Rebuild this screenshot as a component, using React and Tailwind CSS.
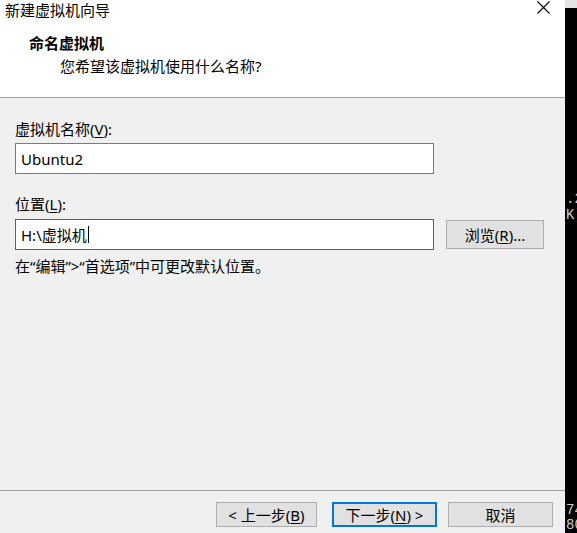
import React from 'react';

const font = { fontFamily: '"Noto Sans", "Noto Sans CJK SC", sans-serif' };
const mono = { fontFamily: '"Liberation Mono", monospace' };

const U = ({ children }) => <span className="underline underline-offset-2">{children}</span>;

const App = () => {
    return (
        <div className="flex h-[533px] w-[577px] overflow-hidden text-[15px] text-black" style={font}>
            <div className="flex w-[565px] flex-col bg-[#f0f0f0]">
                {/* header */}
                <div className="h-[97px] bg-white">
                    <div className="flex h-[20px] items-start justify-between leading-[20px]">
                        <span className="pl-[5px]">新建虚拟机向导</span>
                        <svg width="13" height="13" viewBox="0 0 13 13" className="mr-[15px] mt-[1px]">
                            <path d="M0.5 0.5 L12.5 12.5 M12.5 0.5 L0.5 12.5" stroke="#000" strokeWidth="1.1" />
                        </svg>
                    </div>
                    <div className="mt-[13px] pl-[29px] font-bold leading-[20px]">命名虚拟机</div>
                    <div className="mt-[3px] pl-[60px] leading-[20px]">您希望该虚拟机使用什么名称?</div>
                </div>
                <div className="h-px bg-[#a0a0a0]"></div>

                {/* body */}
                <div className="flex-1 px-[15px] pt-[21px]">
                    <div className="leading-[20px]">虚拟机名称(<U>V</U>):</div>
                    <div className="mt-[4px] flex h-[31px] w-[419px] items-center border border-[#7a7a7a] bg-white px-[5px] leading-[20px]">
                        Ubuntu2
                    </div>
                    <div className="mt-[20px] leading-[20px]">位置(<U>L</U>):</div>
                    <div className="mt-[5px] flex items-center gap-[12px]">
                        <div className="flex h-[31px] w-[419px] items-center border border-[#0078d7] bg-white px-[5px] leading-[20px]">
                            H:\虚拟机<span className="ml-[1px] inline-block h-[17px] w-px bg-black"></span>
                        </div>
                        <button className="h-[29px] w-[98px] border border-[#adadad] bg-[#e1e1e1] leading-[20px]">
                            浏览(<U>R</U>)...
                        </button>
                    </div>
                    <div className="mt-[6px] leading-[20px]">在“编辑”&gt;“首选项”中可更改默认位置。</div>
                </div>

                {/* footer */}
                <div className="h-px bg-[#a0a0a0]"></div>
                <div className="flex h-[42px] items-start justify-end pr-[12px] pt-[11px]">
                    <button className="h-[25px] w-[101px] border border-[#adadad] bg-[#e1e1e1] leading-[20px]">
                        &lt; 上一步(<U>B</U>)
                    </button>
                    <button className="ml-[15px] h-[25px] w-[105px] border-2 border-[#0078d7] bg-[#e1e1e1] leading-[20px]">
                        下一步(<U>N</U>) &gt;
                    </button>
                    <button className="ml-[11px] h-[25px] w-[105px] border border-[#adadad] bg-[#e1e1e1] leading-[20px]">
                        取消
                    </button>
                </div>
            </div>

            {/* background window edge */}
            <div className="flex w-[12px] flex-col overflow-hidden bg-black">
                <div className="h-[11px] bg-[#e3e3e3]"></div>
                <div className="mt-[183px] whitespace-nowrap pl-[1px] text-[14px] leading-[16px] text-[#d0d0d0]" style={mono}>
                    <div>.2</div>
                    <div>K)</div>
                </div>
                <div className="mt-[280px] whitespace-nowrap pl-[1px] text-[14px] leading-[15px] text-[#d0d0d0]" style={mono}>
                    <div>74</div>
                    <div>80</div>
                </div>
            </div>
        </div>
    );
};

export default App;
